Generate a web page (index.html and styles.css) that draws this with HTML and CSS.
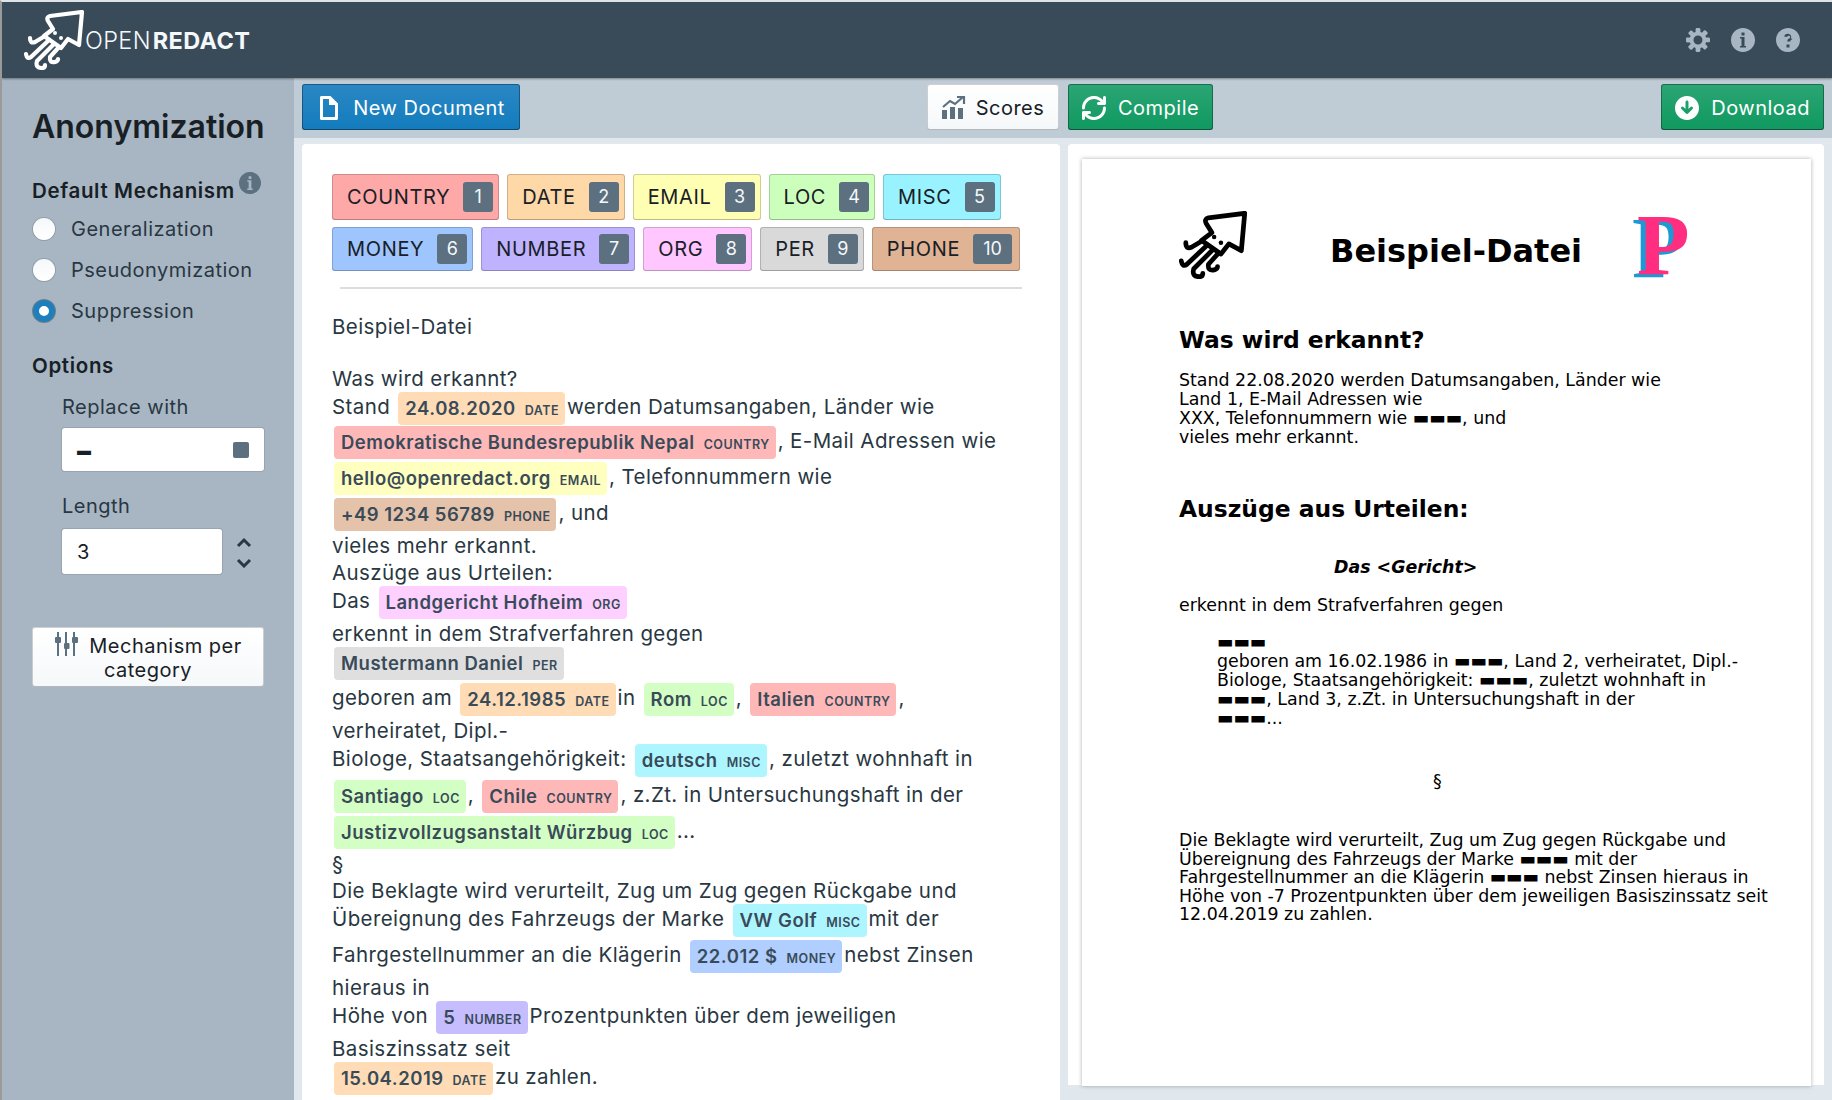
FILE: index.html
```html
<!doctype html>
<html lang="en">
<head>
  <meta charset="UTF-8">
  <title>OpenRedact</title>
  <link rel="stylesheet" href="styles.css">
</head>
<body>

  <svg class="defs" width="0" height="0">
    <symbol id="squid" viewBox="0 0 60 60">
      <g fill="none" stroke="currentColor" stroke-width="4.200" stroke-linecap="round" stroke-linejoin="round">
        <path d="M58 2 L26 6 Q22 7 24 11 L29 19 L20 26 L37 38 L44 29 L55 35 Z"/>
        <path d="M21 26 L11 32 Q6 34 6 28"/>
        <path d="M25 30 L7 47 Q3 50 2 44"/>
        <path d="M30 34 L13 51 Q11 58 18 58 Q21 58 21 55"/>
        <path d="M35 37 L26 47 Q25 53 31 52 Q34 51 34 49"/>
      </g>
      <circle cx="31" cy="23" r="2" fill="currentColor"/>
      <circle cx="37" cy="28" r="2" fill="currentColor"/>
    </symbol>
  </svg>

  <header class="navbar">
    <div class="brand">
      <svg class="brandLogo"><use href="#squid"/></svg>
      <span class="brandName">OPEN<b>REDACT</b></span>
    </div>
    <div class="navIcons">
      <svg class="navIcon" viewBox="0 0 16 16"><path d="M15.19 6.39h-1.85c-.11-.37-.27-.71-.45-1.04l1.36-1.36c.31-.31.31-.82 0-1.13l-1.13-1.13a.803.803 0 00-1.13 0l-1.36 1.36c-.33-.17-.67-.33-1.04-.44V.79c0-.44-.36-.8-.8-.8h-1.6c-.44 0-.8.36-.8.8v1.86c-.39.12-.75.28-1.1.47l-1.3-1.3c-.3-.3-.79-.3-1.09 0L1.82 2.91c-.3.3-.3.79 0 1.09l1.3 1.3c-.2.34-.36.7-.48 1.09H.79c-.44 0-.8.36-.8.8v1.6c0 .44.36.8.8.8h1.85c.11.37.27.71.45 1.04l-1.36 1.36c-.31.31-.31.82 0 1.13l1.13 1.13c.31.31.82.31 1.13 0l1.36-1.36c.33.18.67.33 1.04.44v1.86c0 .44.36.8.8.8h1.6c.44 0 .8-.36.8-.8v-1.86c.39-.12.75-.28 1.1-.47l1.3 1.3c.3.3.79.3 1.09 0l1.09-1.09c.3-.3.3-.79 0-1.09l-1.3-1.3c.19-.35.36-.71.48-1.1h1.85c.44 0 .8-.36.8-.8v-1.6a.816.816 0 00-.81-.79zm-7.2 4.6c-1.66 0-3-1.34-3-3s1.34-3 3-3 3 1.34 3 3-1.34 3-3 3z"/></svg>
      <svg class="navIcon" viewBox="0 0 16 16"><path d="M8 0C3.58 0 0 3.58 0 8s3.58 8 8 8 8-3.58 8-8-3.58-8-8-8zM7 3h2v2H7V3zm3 10H6v-1h1V7H6V6h3v6h1v1z"/></svg>
      <svg class="navIcon" viewBox="0 0 16 16"><path d="M8 0C3.58 0 0 3.58 0 8s3.58 8 8 8 8-3.58 8-8-3.58-8-8-8zM9 13H7v-2h2v2zm1.93-5.69c-.24.3-.53.52-.88.7-.2.12-.33.25-.4.4-.06.14-.1.33-.1.59H7.5c0-.5.09-.87.27-1.12.18-.25.48-.53.9-.8.21-.13.38-.29.51-.47.13-.18.19-.38.19-.63 0-.26-.07-.47-.22-.63-.15-.15-.37-.23-.65-.23-.24 0-.43.07-.59.2-.16.13-.24.33-.24.59H5.55c0-.67.21-1.18.65-1.5.44-.33.95-.5 1.6-.5.7 0 1.27.18 1.7.53.42.35.63.82.63 1.42 0 .37-.13.7-.37 1z"/></svg>
    </div>
  </header>

  <div class="main">

    <aside class="sidebar">
      <h1 class="sideTitle">Anonymization</h1>

      <div class="sideHeading">Default Mechanism
        <svg class="hintIcon" viewBox="0 0 16 16"><path d="M8 0C3.58 0 0 3.58 0 8s3.58 8 8 8 8-3.58 8-8-3.58-8-8-8zM7 3h2v2H7V3zm3 10H6v-1h1V7H6V6h3v6h1v1z"/></svg>
      </div>
      <div class="radioGroup">
        <div class="radioRow"><span class="radio"></span>Generalization</div>
        <div class="radioRow"><span class="radio"></span>Pseudonymization</div>
        <div class="radioRow"><span class="radio checked"></span>Suppression</div>
      </div>

      <div class="sideHeading optionsHeading">Options</div>
      <div class="options">
        <div class="fieldLabel">Replace with</div>
        <div class="field replaceField">
          <span class="fieldDash">▬</span>
          <span class="fieldSquare"></span>
        </div>
        <div class="fieldLabel lengthLabel">Length</div>
        <div class="lengthRow">
          <div class="field lengthField"><span class="fieldValue">3</span></div>
          <svg class="stepper" viewBox="0 0 16 32"><path d="M2 10 L8 4 L14 10 M2 24 L8 30 L14 24"/></svg>
        </div>
      </div>

      <button class="btn perCategory">
        <svg class="slidersIcon" viewBox="0 0 24 24"><path d="M3 0h2v5H3zM3 11h2v13H3zM11 0h2v11h-2zM11 17h2v7h-2zM19 0h2v5h-2zM19 11h2v13h-2z"/><rect x="1" y="5" width="6" height="6" rx="1"/><rect x="10" y="11" width="5.500" height="6" rx="1"/><rect x="18" y="5" width="6" height="6" rx="1"/></svg>
        Mechanism per category
      </button>
    </aside>

    <div class="workspace">

      <div class="toolbar">
        <div class="toolGroup">
          <button class="btn btnPrimary">
            <svg class="btnIcon" viewBox="0 0 16 16"><path d="M9 0H3c-.55 0-1 .45-1 1v14c0 .55.45 1 1 1h10c.55 0 1-.45 1-1V5l-5-5zm3 14H4V2h4v4h4v8z"/></svg>
            New Document
          </button>
          <button class="btn btnScores">
            <svg class="btnIcon" viewBox="0 0 24 24"><path d="M0 14h5v9H0zM8 11h5v12H8zM16 12h5v11h-5z"/><path d="M1 11 L8 5 L13 8 L21 1 M15 1 h7 v7" fill="none" stroke="currentColor" stroke-width="2.200"/></svg>
            Scores
          </button>
        </div>
        <div class="toolGroup">
          <button class="btn btnSuccess">
            <svg class="btnIcon" viewBox="0 0 16 16"><path d="M14.99 6.990c-.55 0-1 .45-1 1 0 3.310-2.690 6-6 6-1.770 0-3.360-.78-4.460-2h1.460c.55 0 1-.45 1-1s-.45-1-1-1h-4c-.55 0-1 .45-1 1v4c0 .55.45 1 1 1s1-.45 1-1v-1.740a7.950 7.950 0 006 2.740c4.420 0 8-3.580 8-8 0-.55-.45-1-1-1zm0-7c-.55 0-1 .45-1 1v1.740a7.950 7.950 0 00-6-2.740c-4.420 0-8 3.580-8 8 0 .55.45 1 1 1s1-.45 1-1c0-3.310 2.690-6 6-6 1.770 0 3.360.78 4.460 2h-1.460c-.55 0-1 .45-1 1s.45 1 1 1h4c.55 0 1-.45 1-1v-4c0-.55-.45-1-1-1z"/></svg>
            Compile
          </button>
          <button class="btn btnSuccess">
            <svg class="btnIcon" viewBox="0 0 16 16"><path d="M8 0C3.580 0 0 3.580 0 8s3.580 8 8 8 8-3.580 8-8-3.580-8-8-8zm3.710 8.710l-3 3c-.18.18-.43.29-.71.29s-.53-.11-.71-.29l-3-3a1.003 1.003 0 011.420-1.420L7 8.590V4c0-.55.45-1 1-1s1 .45 1 1v4.590l1.290-1.290a1.003 1.003 0 011.710.71c0 .28-.11.53-.29.7z"/></svg>
            Download
          </button>
        </div>
      </div>

      <div class="panels">

        <section class="panel editorPanel">
          <div class="catRow catRowFirst">
            <div class="cat catCountry">COUNTRY <span class="catCount">1</span></div>
            <div class="cat catDate">DATE <span class="catCount">2</span></div>
            <div class="cat catEmail">EMAIL <span class="catCount">3</span></div>
            <div class="cat catLoc">LOC <span class="catCount">4</span></div>
            <div class="cat catMisc">MISC <span class="catCount">5</span></div>
          </div>
          <div class="catRow">
            <div class="cat catMoney">MONEY <span class="catCount">6</span></div>
            <div class="cat catNumber">NUMBER <span class="catCount">7</span></div>
            <div class="cat catOrg">ORG <span class="catCount">8</span></div>
            <div class="cat catPer">PER <span class="catCount">9</span></div>
            <div class="cat catPhone">PHONE <span class="catCount catCountWide">10</span></div>
          </div>
          <hr class="catRule">

          <div class="text">
            <div class="line">Beispiel-Datei</div>
            <div class="line blankLine"></div>
            <div class="line">Was wird erkannt?</div>
            <div class="line tall shortLine">Stand <span class="mark markDate">24.08.2020<small>DATE</small></span>werden Datumsangaben, Länder wie</div>
            <div class="line tall"><span class="mark markCountry">Demokratische Bundesrepublik Nepal<small>COUNTRY</small></span>, E-Mail Adressen wie</div>
            <div class="line tall"><span class="mark markEmail">hello@openredact.org<small>EMAIL</small></span>, Telefonnummern wie</div>
            <div class="line tall"><span class="mark markPhone">+49 1234 56789<small>PHONE</small></span>, und</div>
            <div class="line looseLine">vieles mehr erkannt.</div>
            <div class="line">Auszüge aus Urteilen:</div>
            <div class="line tall">Das <span class="mark markOrg">Landgericht Hofheim<small>ORG</small></span></div>
            <div class="line">erkennt in dem Strafverfahren gegen</div>
            <div class="line tall"><span class="mark markPer">Mustermann Daniel<small>PER</small></span></div>
            <div class="line tall">geboren am <span class="mark markDate">24.12.1985<small>DATE</small></span>in <span class="mark markLoc">Rom<small>LOC</small></span>, <span class="mark markCountry">Italien<small>COUNTRY</small></span>,</div>
            <div class="line">verheiratet, Dipl.-</div>
            <div class="line tall">Biologe, Staatsangehörigkeit: <span class="mark markMisc">deutsch<small>MISC</small></span>, zuletzt wohnhaft in</div>
            <div class="line tall"><span class="mark markLoc">Santiago<small>LOC</small></span>, <span class="mark markCountry">Chile<small>COUNTRY</small></span>, z.Zt. in Untersuchungshaft in der</div>
            <div class="line tall"><span class="mark markLoc">Justizvollzugsanstalt Würzbug<small>LOC</small></span>...</div>
            <div class="line looseLine">§</div>
            <div class="line">Die Beklagte wird verurteilt, Zug um Zug gegen Rückgabe und</div>
            <div class="line tall">Übereignung des Fahrzeugs der Marke <span class="mark markMisc">VW Golf<small>MISC</small></span>mit der</div>
            <div class="line tall">Fahrgestellnummer an die Klägerin <span class="mark markMoney">22.012 $<small>MONEY</small></span>nebst Zinsen</div>
            <div class="line">hieraus in</div>
            <div class="line tall">Höhe von <span class="mark markNumber">5<small>NUMBER</small></span>Prozentpunkten über dem jeweiligen</div>
            <div class="line">Basiszinssatz seit</div>
            <div class="line tall"><span class="mark markDate">15.04.2019<small>DATE</small></span>zu zahlen.</div>
          </div>
        </section>

        <section class="panel previewPanel">
          <div class="page">
            <div class="pageHead">
              <svg class="pageLogo"><use href="#squid"/></svg>
              <div class="pageTitle">Beispiel-Datei</div>
              <div class="pageP">P</div>
            </div>
            <h2 class="pageH2">Was wird erkannt?</h2>
            <p class="pagePara">Stand 22.08.2020 werden Datumsangaben, Länder wie<br>Land 1, E-Mail Adressen wie<br>XXX, Telefonnummern wie ▬▬▬, und<br>vieles mehr erkannt.</p>
            <h2 class="pageH2 pageH2Second">Auszüge aus Urteilen:</h2>
            <p class="pageCourt">Das &lt;Gericht&gt;</p>
            <p class="pagePara pageAccused">erkennt in dem Strafverfahren gegen</p>
            <p class="pagePara pageIndent">▬▬▬<br>geboren am 16.02.1986 in ▬▬▬, Land 2, verheiratet, Dipl.-<br>Biologe, Staatsangehörigkeit: ▬▬▬, zuletzt wohnhaft in<br>▬▬▬, Land 3, z.Zt. in Untersuchungshaft in der<br>▬▬▬...</p>
            <p class="pagePara pageSection">§</p>
            <p class="pagePara pageVerdict">Die Beklagte wird verurteilt, Zug um Zug gegen Rückgabe und<br>Übereignung des Fahrzeugs der Marke ▬▬▬ mit der<br>Fahrgestellnummer an die Klägerin ▬▬▬ nebst Zinsen hieraus in<br>Höhe von -7 Prozentpunkten über dem jeweiligen Basiszinssatz seit<br>12.04.2019 zu zahlen.</p>
          </div>
        </section>

      </div>
    </div>
  </div>

</body>
</html>
```

FILE: styles.css
```css
html, body {
  height: 100%;
  margin: 0;
  padding: 0;
}

body {
  width: 1832px;
  height: 1100px;
  overflow: hidden;
  box-sizing: border-box;
  border-top: 2px solid #dfe2e6;
  border-left: 2px solid #9a9a9a;
  font-family: Inter, "Liberation Sans", sans-serif;
  font-size: 20px;
  color: #182026;
  display: flex;
  flex-direction: column;
}

.defs {
  position: absolute;
}

/* top bar */
.navbar {
  height: 76px;
  flex: none;
  background-color: #394b59;
  box-shadow: 0 1px 2px rgba(16, 22, 26, 0.4);
  display: flex;
  align-items: center;
  justify-content: space-between;
  position: relative;
  padding: 0 32px 0 22px;
}

.brand {
  display: flex;
  align-items: center;
  color: #f5f8fa;
}

.brandLogo {
  width: 60px;
  height: 60px;
  color: #fff;
}

.brandName {
  font-size: 23.500px;
  font-weight: 300;
  letter-spacing: 0.35px;
  margin-left: 1px;
}

.brandName b {
  font-weight: 700;
  margin-left: 2px;
}

.navIcons {
  display: flex;
  gap: 21px;
}

.navIcon {
  width: 24px;
  height: 24px;
  fill: #a7b6c2;
}

.main {
  flex: 1;
  display: flex;
  min-height: 0;
}

/* left column */
.sidebar {
  width: 292px;
  flex: none;
  box-sizing: border-box;
  background-color: #a7b6c2;
  padding: 29px 30px 0 30px;
}

.sideTitle {
  margin: 0;
  font-size: 32px;
  line-height: 40px;
  font-weight: 600;
}

.sideHeading {
  margin-top: 25px;
  font-size: 20.500px;
  line-height: 26px;
  font-weight: 600;
  position: relative;
  letter-spacing: 0.65px;
}

.hintIcon {
  width: 22px;
  height: 22px;
  fill: #5c7080;
  margin-left: -2px;
  vertical-align: 4px;
}

.radioGroup {
  margin-top: 4px;
}

.radioRow {
  display: flex;
  align-items: center;
  height: 41px;
  color: #293742;
  letter-spacing: 0.5px;
}

.radio {
  width: 22px;
  height: 22px;
  flex: none;
  margin: 0 16px 0 1px;
  border-radius: 50%;
  background: linear-gradient(#f5f8fa, #ffffff);
  box-shadow: 0 0 0 1px rgba(16, 22, 26, 0.15);
}

.radio.checked {
  background: #fff;
  border: 6px solid #1f7fbd;
  box-sizing: border-box;
  box-shadow: 0 0 0 1px rgba(16, 22, 26, 0.35);
}

.optionsHeading {
  margin-top: 22px;
}

.options {
  padding-left: 30px;
}

.fieldLabel {
  margin-top: 15px;
  line-height: 26px;
  color: #293742;
  letter-spacing: 0.5px;
}

.lengthLabel {
  margin-top: 22px;
}

.field {
  background: #fff;
  border-radius: 3px;
  box-shadow: 0 0 0 1px rgba(16, 22, 26, 0.1);
  display: flex;
  align-items: center;
  justify-content: space-between;
  box-sizing: border-box;
  padding: 0 15px;
  margin-top: 8px;
}

.replaceField {
  height: 43px;
  width: 202px;
}

.lengthField {
  height: 45px;
  width: 160px;
  margin-top: 0;
}

.fieldSquare {
  width: 16px;
  height: 16px;
  background: #5c7080;
  border-radius: 2px;
}

.fieldValue {
  font-size: 20px;
}

.fieldDash {
  font-size: 14px;
}

.lengthRow {
  display: flex;
  align-items: center;
  margin-top: 10px;
}

.stepper {
  width: 16px;
  height: 32px;
  margin-left: 14px;
  fill: none;
  stroke: #293742;
  stroke-width: 3;
}

/* buttons */
.btn {
  font: inherit;
  border: 0;
  border-radius: 3px;
  display: inline-flex;
  align-items: center;
  justify-content: center;
  gap: 12px;
  height: 46px;
  padding: 2px 14px 0 14px;
  letter-spacing: 0.5px;
  color: #182026;
  background: linear-gradient(#ffffff, #f5f8fa);
  box-shadow: inset 0 0 0 1px rgba(16, 22, 26, 0.2), inset 0 -1px 0 rgba(16, 22, 26, 0.1);
}

.btnIcon {
  width: 24px;
  height: 24px;
  fill: currentColor;
  flex: none;
}

.btnPrimary {
  color: #fff;
  width: 218px;
  background: linear-gradient(#2b87c4, #137cbd);
  box-shadow: inset 0 0 0 1px rgba(16, 22, 26, 0.4), inset 0 -1px 0 rgba(16, 22, 26, 0.2);
}

.btnSuccess {
  color: #fff;
  background: linear-gradient(#2ba574, #0f9960);
  box-shadow: inset 0 0 0 1px rgba(16, 22, 26, 0.4), inset 0 -1px 0 rgba(16, 22, 26, 0.2);
}

.btnScores {
  width: 132px;
  margin-right: 1px;
  gap: 10px;
}

.btnScores .btnIcon {
  color: #5c7080;
}

.perCategory {
  display: block;
  width: 232px;
  height: 60px;
  margin: 53px 0 0 0;
  padding: 0 10px;
  line-height: 24px;
  text-align: center;
  white-space: normal;
}

.slidersIcon {
  width: 24px;
  height: 24px;
  fill: #5c7080;
  vertical-align: -3px;
  margin-right: 5px;
}

/* right side */
.workspace {
  flex: 1;
  min-width: 0;
  display: flex;
  flex-direction: column;
  background-color: #e1e8ed;
}

.toolbar {
  height: 60px;
  flex: none;
  box-sizing: border-box;
  background-color: #bfccd6;
  display: grid;
  grid-template-columns: 758px 756px;
  gap: 8px;
  padding: 6px 8px 0 8px;
}

.toolGroup {
  display: flex;
  justify-content: space-between;
}

.panels {
  flex: 1;
  min-height: 0;
  display: grid;
  grid-template-columns: 758px 756px;
  gap: 8px;
  padding: 6px 8px 0 8px;
}

.panel {
  background: #fff;
  border-radius: 4px 4px 0 0;
  min-height: 0;
}

.editorPanel {
  padding: 30px 30px 0 30px;
}

/* category buttons */
.catRow {
  display: flex;
  gap: 8px;
  height: 44px;
  margin-bottom: 7px;
}

.catRowFirst {
  height: 46px;
}

.cat {
  display: flex;
  align-items: center;
  gap: 13px;
  padding: 0 6px 0 15px;
  border-radius: 3px;
  letter-spacing: 0.65px;
  box-shadow: inset 0 0 0 1px rgba(16, 22, 26, 0.2), inset 0 -1px 0 rgba(16, 22, 26, 0.1);
}

.catCount {
  min-width: 30px;
  height: 30px;
  box-sizing: border-box;
  padding: 0 9px;
  border-radius: 3px;
  background: #5c7080;
  color: #f5f8fa;
  font-size: 18px;
  line-height: 30px;
  text-align: center;
  letter-spacing: 0;
}

.catCountWide {
  padding: 0 10px;
  margin-right: 2px;
}

.catCountry { background: #ffa8a8; }
.catDate { background: #ffd8a8; }
.catEmail { background: #ffffb3; }
.catLoc { background: #ccffbb; }
.catMisc { background: #99f2ff; }
.catMoney { background: #9fc5ff; }
.catNumber { background: #bfb3ff; }
.catOrg { background: #ffc6ff; }
.catPer { background: #d9d9d9; }
.catPhone { background: #e0b394; }

.catRule {
  width: 682px;
  height: 2px;
  margin: 16px 0 0 8px;
  border: 0;
  background: #dddddd;
}

/* annotated text */
.text {
  margin-top: 25px;
  font-size: 20.500px;
  color: #293742;
  letter-spacing: 0.4px;
  white-space: nowrap;
}

.line {
  height: 25px;
  line-height: 25px;
}

.line.tall {
  height: 36px;
  line-height: 32px;
}

.line.shortLine {
  height: 34px;
}

.line.looseLine {
  height: 27px;
}

.blankLine {
  height: 27px;
}

.mark {
  display: inline-block;
  height: 33px;
  line-height: 33px;
  margin: 0 2px;
  padding: 0 6px 0 7px;
  border-radius: 4px;
  font-size: 18.500px;
  font-weight: 600;
  letter-spacing: 0.5px;
  color: #394b59;
  vertical-align: -1px;
}

.mark small {
  margin-left: 9px;
  font-size: 12.500px;
  font-weight: 600;
  letter-spacing: 0.5px;
}

.markCountry { background: #ffb8b8; }
.markDate { background: #ffdcb5; }
.markEmail { background: #ffffc0; }
.markLoc { background: #d4ffc4; }
.markMisc { background: #aef6ff; }
.markMoney { background: #b0ceff; }
.markNumber { background: #c6bdff; }
.markOrg { background: #fdd0ff; }
.markPer { background: #dfdfdf; }
.markPhone { background: #e5c2aa; }

/* pdf preview */
.previewPanel {
  padding: 15px 13px 0 14px;
  height: 941px;
  box-sizing: border-box;
}

.page {
  height: 927px;
  box-sizing: border-box;
  padding: 52px 36px 0 97px;
  background: #fff;
  box-shadow: 0 0 4px rgba(16, 22, 26, 0.35);
  font-family: "DejaVu Sans", sans-serif;
  color: #000;
}

.pageHead {
  display: flex;
  align-items: center;
  height: 68px;
}

.pageLogo {
  width: 68px;
  height: 68px;
  color: #000;
  flex: none;
}

.pageTitle {
  font-size: 32px;
  font-weight: 700;
  margin: 12px 0 0 83px;
  width: 305px;
}

.pageP {
  font-family: "Liberation Serif", serif;
  font-size: 86px;
  font-weight: 700;
  line-height: 68px;
  margin-left: 2px;
  color: #ff2e80;
  text-shadow: -5px 3px 0 #1d9ad6;
}

.pageH2 {
  margin: 46px 0 0 0;
  font-size: 23.400px;
  line-height: 30px;
  font-weight: 700;
}

.pageH2Second {
  margin-top: 47px;
}

.pagePara {
  margin: 0;
  font-size: 17.400px;
  line-height: 19px;
}

.pageH2 + .pagePara {
  margin-top: 16px;
}

.pageCourt {
  margin: 34px 0 0 155px;
  font-size: 17.400px;
  line-height: 19px;
  font-weight: 700;
  font-style: italic;
}

.pagePara.pageAccused {
  margin-top: 19px;
}

.pageIndent {
  margin: 18px 0 0 38px;
}

.pageSection {
  margin: 44px 0 0 254px;
}

.pageVerdict {
  margin-top: 40px;
  line-height: 18.500px;
}
```
